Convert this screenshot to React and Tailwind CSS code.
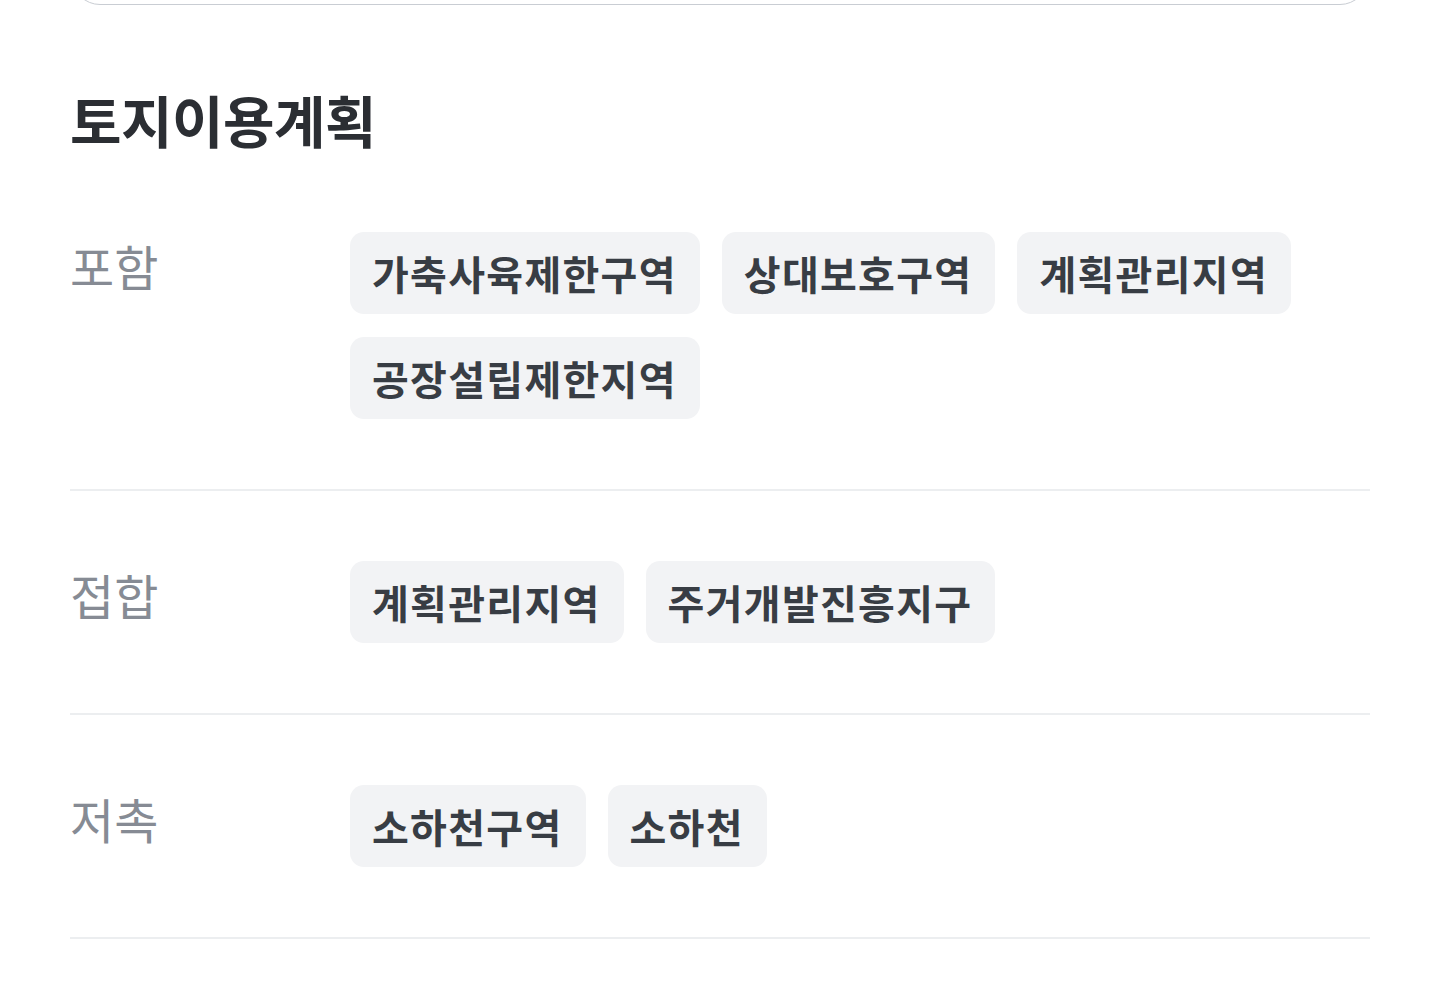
import React from 'react';

const SECTIONS = [
    { id: 'include', label: '포함', zones: ['가축사육제한구역', '상대보호구역', '계획관리지역', '공장설립제한지역'] },
    { id: 'adjacent', label: '접합', zones: ['계획관리지역', '주거개발진흥지구'] },
    { id: 'conflict', label: '저촉', zones: ['소하천구역', '소하천'] },
];

const FONT = { fontFamily: '"Noto Sans CJK KR", "Noto Sans", sans-serif' };

const ZoneChip = ({ name }) => (
    <span className="inline-flex items-center h-[82px] pl-[22px] pr-[23px] rounded-[14px] bg-[#f2f3f5] text-[40px] leading-none font-semibold tracking-[1.3px] text-[#383d44]">
        {name}
    </span>
);

const App = () => {
    return (
        <div className="min-h-screen bg-white px-[70px] overflow-hidden" style={FONT}>
            {/* Previous card, only its bottom edge is on screen */}
            <div className="-mt-[95px] h-[100px] mx-[2px] rounded-[28px] border-[1.5px] border-[#c9cdd3] bg-white" />

            <h2 className="mt-[86px] mb-[15px] text-[56px] leading-none font-bold tracking-[-0.5px] text-[#2b2e33]">
                토지이용계획
            </h2>

            <div>
                {SECTIONS.map((section) => (
                    <div key={section.id} className="flex py-[70px] border-b-2 border-[#eceef0]">
                        <div className="w-[280px] shrink-0 pt-[9px] text-[48px] leading-none tracking-[0px] text-[#868b94]">
                            {section.label}
                        </div>
                        <div className="flex flex-wrap gap-x-[22px] gap-y-[23px] flex-1">
                            {section.zones.map((zone, i) => (
                                <ZoneChip key={i} name={zone} />
                            ))}
                        </div>
                    </div>
                ))}
            </div>
        </div>
    );
};

export default App;
